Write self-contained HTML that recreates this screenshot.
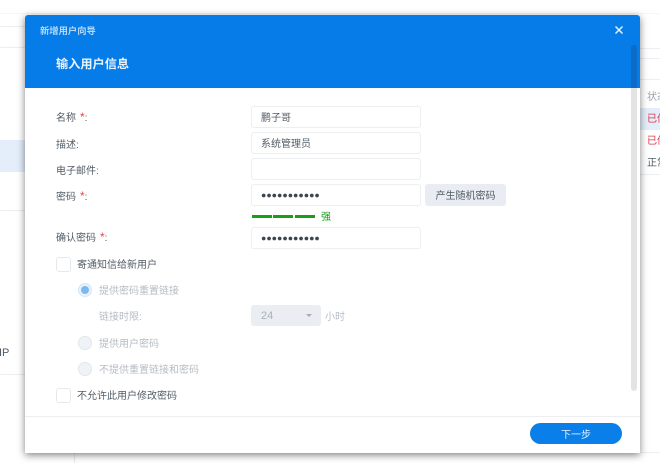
<!DOCTYPE html>
<html><head><meta charset="utf-8">
<style>
html,body{margin:0;padding:0;width:660px;height:463px;overflow:hidden;background:#fff}
body{position:relative;font-family:"Liberation Sans","Noto Sans CJK SC",sans-serif;font-size:10px;color:#4e5a66;filter:blur(.35px)}
.a{position:absolute;white-space:nowrap}
.l{position:absolute;left:56px;line-height:14px;font-size:10px;color:#525c66;white-space:nowrap}
.l i{font-style:normal;color:#e8424f;margin-left:4px;font-size:12px;line-height:10px}
.in{position:absolute;left:251px;width:168px;height:20px;border:1px solid #eceef2;border-radius:3px;background:#fff;line-height:24px;font-size:10px;color:#525c66;text-indent:9px;white-space:nowrap}
.d{letter-spacing:0;font-size:8.850px;color:#3d4650;line-height:20px}
.cb{position:absolute;left:56px;width:13px;height:13px;border:1px solid #e6e9ec;border-radius:3px;background:#fff}
.rd{position:absolute;left:78px;width:12px;height:12px;border:1px solid #e0e6ec;border-radius:50%;background:#eff3f7}
.ln{position:absolute;height:1px;background:#eceef1}
.bar{position:absolute;top:215px;height:3px;width:20px;background:#16a015}
</style></head><body>
<!-- background page -->
<div class="ln" style="left:0;top:13px;width:660px;background:#f6f6f6"></div>
<div class="ln" style="left:0;top:26px;width:25px"></div>
<div class="ln" style="left:0;top:47px;width:25px"></div>
<div class="a" style="left:0;top:140px;width:25px;height:32px;background:#e3eefa"></div>
<div class="ln" style="left:0;top:210px;width:25px"></div>
<div class="ln" style="left:0;top:374px;width:25px"></div>
<div class="a" style="left:-1px;top:347px;font-size:11px;color:#525c66">IP</div>
<div class="a" style="left:74px;top:452px;width:1px;height:11px;background:#e6e8eb"></div>
<div class="ln" style="left:640px;top:48px;width:20px"></div>
<div class="ln" style="left:640px;top:58px;width:20px"></div>
<div class="ln" style="left:640px;top:79px;width:20px"></div>
<div class="a" style="left:640px;top:108px;width:20px;height:22px;background:#e3eefa"></div>
<div class="ln" style="left:640px;top:174px;width:20px"></div>
<div class="ln" style="left:640px;top:452px;width:20px"></div>
<div class="a" style="left:647px;top:91px;width:13px;overflow:hidden;font-size:10px;line-height:14px;color:#9aa2aa">状态</div>
<div class="a" style="left:647px;top:113px;width:13px;overflow:hidden;font-size:10px;line-height:14px;color:#d8354a">已停</div>
<div class="a" style="left:647px;top:135px;width:13px;overflow:hidden;font-size:10px;line-height:14px;color:#d8354a">已停</div>
<div class="a" style="left:647px;top:157px;width:13px;overflow:hidden;font-size:10px;line-height:14px;color:#525c66">正常</div>

<!-- dialog -->
<div class="a" style="left:25px;top:15px;width:615px;height:438px;background:#fff;border-radius:3px 3px 0 0;box-shadow:0 2px 8px rgba(0,0,0,.5)"></div>
<div class="a" style="left:25px;top:15px;width:615px;height:73px;background:#057ce8;border-radius:3px 3px 0 0"></div>
<div class="a" style="left:40px;top:25px;font-size:9.300px;line-height:13px;font-weight:bold;color:#b7d8f8">新增用户向导</div>
<div class="a" style="left:56px;top:56px;font-size:12.200px;line-height:17px;font-weight:bold;color:#e8f3fe">输入用户信息</div>
<svg class="a" style="left:614px;top:25px" width="10" height="10" viewBox="0 0 10 10"><path d="M1.500 1.500L8.500 8.500M8.500 1.500L1.500 8.500" stroke="#e6f2fd" stroke-width="1.500" fill="none"/></svg>

<!-- scrollbar -->
<div class="a" style="left:631px;top:45px;width:6px;height:43px;background:#0a6cc8;border-radius:3px 3px 0 0"></div>
<div class="a" style="left:631px;top:88px;width:6px;height:303px;background:#e3e3e3;border-radius:0 0 3px 3px"></div>

<!-- form -->
<div class="l" style="top:112px">名称<i>*</i>:</div>
<div class="l" style="top:139px">描述:</div>
<div class="l" style="top:165px">电子邮件:</div>
<div class="l" style="top:191px">密码<i>*</i>:</div>
<div class="l" style="top:232px">确认密码<i>*</i>:</div>

<div class="in" style="top:106px">鹏子哥</div>
<div class="in" style="top:132px">系统管理员</div>
<div class="in" style="top:158px"></div>
<div class="in d" style="top:184px">●●●●●●●●●●●</div>
<div class="in d" style="top:227px">●●●●●●●●●●●</div>

<div class="a" style="left:425px;top:184px;width:81px;height:22px;background:#e9edf3;border-radius:3px;text-align:center;line-height:26px;font-size:10px;color:#525c66">产生随机密码</div>

<div class="bar" style="left:252px"></div>
<div class="bar" style="left:273px"></div>
<div class="bar" style="left:295px"></div>
<div class="a" style="left:321px;top:211px;font-size:10px;line-height:14px;color:#16a015">强</div>

<div class="cb" style="top:257px"></div>
<div class="l" style="left:77px;top:259px">寄通知信给新用户</div>
<div class="rd" style="top:283px;background:#e8f2fb;border-color:#d5e6f6"></div>
<div class="a" style="left:81px;top:286px;width:8px;height:8px;border-radius:50%;background:#7db9ef"></div>
<div class="l" style="left:99px;top:285px;color:#b6bcc4">提供密码重置链接</div>
<div class="l" style="left:99px;top:311px;color:#b6bcc4">链接时限:</div>
<div class="a" style="left:251px;top:305px;width:70px;height:21px;background:#eaeef2;border-radius:3px;line-height:22px;text-indent:10px;font-size:11px;color:#aab1b9">24</div>
<div class="a" style="left:306px;top:314px;width:0;height:0;border-left:3.500px solid transparent;border-right:3.500px solid transparent;border-top:3.500px solid #a5acb4"></div>
<div class="l" style="left:325px;top:311px;color:#b6bcc4">小时</div>
<div class="rd" style="top:336px"></div>
<div class="l" style="left:99px;top:338px;color:#b6bcc4">提供用户密码</div>
<div class="rd" style="top:362px"></div>
<div class="l" style="left:99px;top:364px;color:#b6bcc4">不提供重置链接和密码</div>
<div class="cb" style="top:388px"></div>
<div class="l" style="left:77px;top:390px">不允许此用户修改密码</div>

<!-- footer -->
<div class="ln" style="left:25px;top:416px;width:615px"></div>
<div class="a" style="left:530px;top:423px;width:92px;height:21px;border-radius:11px;background:#0a7fe9;color:#e8f3fe;text-align:center;line-height:25px;font-size:10px">下一步</div>
</body></html>
